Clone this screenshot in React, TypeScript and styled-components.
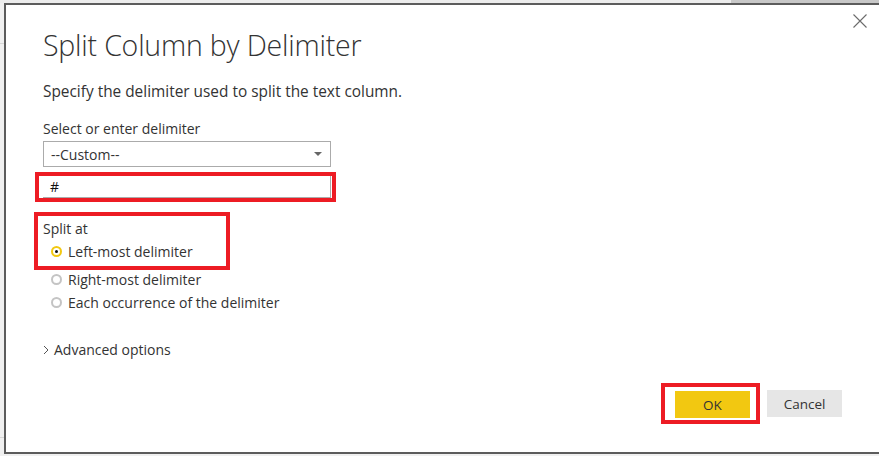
import styled, { createGlobalStyle } from "styled-components";

const Global = createGlobalStyle`
  html, body { margin: 0; padding: 0; background: #f0f0f0; }
  body { font-family: "Open Sans", "Noto Sans", Arial, sans-serif; color: #333; }
  #root { width: 879px; height: 456px; overflow: hidden; }
`;

const Page = styled.div`
  width: 879px;
  height: 456px;
  display: flex;
  flex-direction: column;
  background: #f0f0f0;
`;

const TopStrip = styled.div`
  height: 3px;
  display: flex;
  justify-content: flex-end;
  background: #ececec;
  span {
    width: 148px;
    background: #c8c8c8;
  }
`;

const Body = styled.div`
  display: flex;
  height: 451px;
`;

const Gutter = styled.div`
  width: 4px;
  background:
    linear-gradient(#d6d6d6, #d6d6d6) 0 40px / 100% 1px no-repeat,
    linear-gradient(#d6d6d6, #d6d6d6) 0 434px / 100% 1px no-repeat,
    #f0f0f0;
`;

const Dialog = styled.div`
  position: relative;
  flex: 1;
  background: #fff;
  border-top: 2px solid #5c5c5c;
  border-left: 2px solid #5c5c5c;
  border-bottom: 2px solid #5c5c5c;
  padding: 21px 0 0 37px;
  display: flex;
  flex-direction: column;
  box-sizing: border-box;
`;

const Close = styled.button`
  position: absolute;
  top: 8px;
  right: 11px;
  width: 16px;
  height: 16px;
  padding: 0;
  border: 0;
  background: none;
  cursor: pointer;
`;

const Title = styled.h1`
  margin: 0;
  font-size: 28.5px;
  font-weight: 300;
  color: #333;
  line-height: 38px;
  letter-spacing: -0.2px;
`;

const Subtitle = styled.p`
  margin: 18px 0 0;
  font-size: 15.4px;
  line-height: 20px;
  color: #333;
`;

const Label = styled.div`
  font-size: 14px;
  line-height: 20px;
  color: #333;
`;

const Field = styled.div`
  margin-top: 17px;
  display: flex;
  flex-direction: column;
`;

const Select = styled.div`
  margin-top: 2px;
  width: 288px;
  height: 26px;
  box-sizing: border-box;
  border: 1px solid #ababab;
  display: flex;
  align-items: center;
  justify-content: space-between;
  padding: 0 8px 0 7px;
  font-size: 14px;
  color: #333;
`;

const Caret = styled.span`
  width: 0;
  height: 0;
  border-left: 4px solid transparent;
  border-right: 4px solid transparent;
  border-top: 4px solid #666;
`;

const InputHighlight = styled.div`
  margin: 5px 0 0 -8px;
  align-self: flex-start;
  border: 4px solid #ed1c24;
  padding: 0 1px 0 4px;
`;

const TextInput = styled.div`
  width: 288px;
  height: 22px;
  box-sizing: border-box;
  border-right: 1px solid #ababab;
  border-bottom: 1px solid #ababab;
  display: flex;
  align-items: center;
  padding-left: 7px;
  font-size: 14px;
  color: #111;
`;

const SplitHighlight = styled.div`
  margin: 10px 0 0 -9px;
  align-self: flex-start;
  box-sizing: border-box;
  width: 196px;
  border: 4px solid #ed1c24;
  padding: 3px 0 3px 5px;
`;

const Radio = styled.div<{ $h?: number }>`
  display: flex;
  align-items: center;
  gap: 6px;
  height: ${({ $h }) => $h ?? 24}px;
  padding-left: 8px;
  font-size: 14px;
  color: #333;
`;

const Dot = styled.span<{ $on?: boolean }>`
  width: 11px;
  height: 11px;
  box-sizing: border-box;
  border-radius: 50%;
  border: 2px solid ${({ $on }) => ($on ? "#f2c811" : "#c4c4c4")};
  display: flex;
  align-items: center;
  justify-content: center;
  &::after {
    content: "";
    width: 3px;
    height: 3px;
    border-radius: 50%;
    background: ${({ $on }) => ($on ? "#111" : "transparent")};
  }
`;

const Options = styled.div`
  display: flex;
  flex-direction: column;
`;

const Advanced = styled.div`
  margin-top: 24px;
  display: flex;
  align-items: center;
  gap: 5px;
  font-size: 14px;
  color: #333;
`;

const Footer = styled.div`
  margin-top: 24px;
  display: flex;
  justify-content: flex-end;
  align-items: center;
  gap: 7px;
  padding-right: 37px;
`;

const OkHighlight = styled.div`
  border: 4px solid #ed1c24;
  padding: 4px 6px 2px 10px;
`;

const Button = styled.button<{ $primary?: boolean }>`
  width: 75px;
  height: 27px;
  border: 0;
  padding: 0;
  font-family: inherit;
  font-size: 13.5px;
  color: #333;
  background: ${({ $primary }) => ($primary ? "#f2c811" : "#e6e6e6")};
  cursor: pointer;
  display: block;
`;

export default function App() {
  return (
    <Page>
      <Global />
      <TopStrip>
        <span />
      </TopStrip>
      <Body>
        <Gutter />
        <Dialog>
          <Close aria-label="Close">
            <svg width="16" height="16" viewBox="0 0 16 16">
              <path d="M1.5 1.5 L14.5 14.5 M14.5 1.5 L1.5 14.5" stroke="#6b6b6b" strokeWidth="1.1" fill="none" />
            </svg>
          </Close>
          <Title>Split Column by Delimiter</Title>
          <Subtitle>Specify the delimiter used to split the text column.</Subtitle>
          <Field>
            <Label>Select or enter delimiter</Label>
            <Select>
              <span>--Custom--</span>
              <Caret />
            </Select>
            <InputHighlight>
              <TextInput>#</TextInput>
            </InputHighlight>
          </Field>
          <Options>
            <SplitHighlight>
              <Label>Split at</Label>
              <Radio>
                <Dot $on />
                Left-most delimiter
              </Radio>
            </SplitHighlight>
            <Radio $h={19}>
              <Dot />
              Right-most delimiter
            </Radio>
            <Radio $h={27}>
              <Dot />
              Each occurrence of the delimiter
            </Radio>
          </Options>
          <Advanced>
            <svg width="6" height="10" viewBox="0 0 6 10">
              <path d="M1 1 L5 5 L1 9" stroke="#555" strokeWidth="1" fill="none" />
            </svg>
            Advanced options
          </Advanced>
          <Footer>
            <OkHighlight>
              <Button $primary>OK</Button>
            </OkHighlight>
            <Button>Cancel</Button>
          </Footer>
        </Dialog>
      </Body>
    </Page>
  );
}
